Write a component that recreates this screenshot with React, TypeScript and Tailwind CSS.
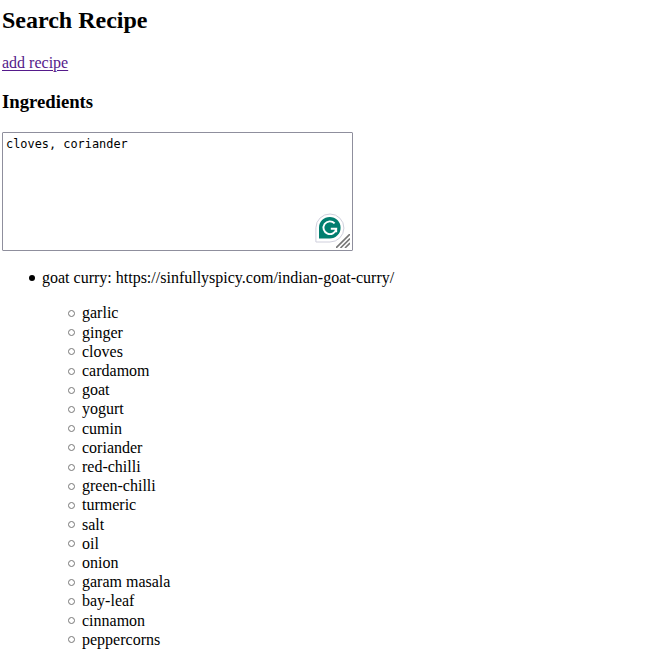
const ingredients = ['garlic','ginger','cloves','cardamom','goat','yogurt','cumin','coriander','red-chilli','green-chilli','turmeric','salt','oil','onion','garam masala','bay-leaf','cinnamon','peppercorns'];

export default function App() {
  return (
    <main className="h-[662px] w-[660px] overflow-hidden bg-white pl-[2px] pt-[6px] font-['Liberation_Serif',serif] text-[16px] leading-[19.2px] text-black">
      <h2 className="text-[24px] font-bold leading-[28px]">Search Recipe</h2>
      <a href="#" className="mt-[19px] block w-fit text-[#551a8b] underline decoration-1 underline-offset-2">add recipe</a>
      <h3 className="mt-[19px] text-[18.72px] font-bold leading-[22px]">Ingredients</h3>
      <div className="relative mt-[19px] h-[119px] w-[351px]">
        <textarea defaultValue="cloves, coriander" spellCheck={false} className="block h-full w-full resize-none rounded-[1px] border border-[#8f8f9d] bg-white px-[3px] py-[4px] font-['DejaVu_Sans_Mono',monospace] text-[11.9px] leading-[15px] outline-none" />
        <svg className="absolute left-[313px] top-[80px]" width="31" height="32" viewBox="0 0 31 32">
          <path d="M.9 30V15.8A14 14 0 1 1 14.9 30Z" fill="#fff" stroke="#cfcfdc" />
          <path d="M4 26.5V15.8A10.8 10.8 0 1 1 14.8 26.5Z" fill="#027e6f" />
          <path d="M19.6 11.4A6.4 6.4 0 1 0 21.2 16.8H15.8M21.2 16.2V20.2" fill="none" stroke="#fff" strokeWidth="1.9" />
        </svg>
        <svg className="absolute bottom-[3px] right-[3px]" width="14" height="14" viewBox="0 0 14 14" stroke="#777" strokeWidth="1.6"><path d="M0 14 14 0M4.5 14 14 4.5M9 14l5-5" /></svg>
      </div>
      <ul className="mt-[17px] pl-[40px]">
        <li className="relative before:absolute before:left-[-13.5px] before:top-[7px] before:size-[6px] before:rounded-full before:bg-black">goat curry: https://sinfullyspicy.com/indian-goat-curry/
          <ul className="mt-[16px] pl-[40px]">
            {ingredients.map((name) => <li className="relative before:absolute before:left-[-14px] before:top-[6.5px] before:size-[7px] before:rounded-full before:border before:border-[#777]" key={name}>{name}</li>)}
          </ul>
        </li>
      </ul>
    </main>
  );
}
